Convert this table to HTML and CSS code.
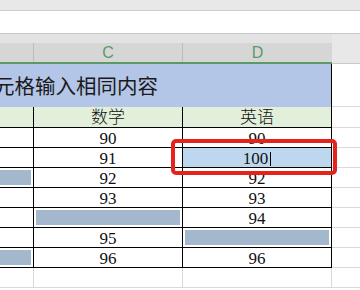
FILE: index.html
```html
<!DOCTYPE html>
<html lang="zh-CN">
<head>
<meta charset="utf-8">
<link rel="stylesheet" href="styles.css">
</head>
<body>
<div class="top"></div>
<div class="fx"></div>
<div class="colhead">
  <div class="hc"><div class="lab"></div></div>
  <div class="hc"><div class="lab">C</div></div>
  <div class="hc"><div class="lab last">D</div></div>
  <div class="hc rest"></div>
</div>
<div class="sheet">
  <div class="c title">元格输入相同内容</div>
  <div class="c e tall"></div>

  <div class="c hd"></div>
  <div class="c hd cjk">数学</div>
  <div class="c hd cjk">英语</div>
  <div class="c e hdr"></div>

  <div class="c"></div><div class="c">90</div><div class="c">90</div><div class="c e"></div>
  <div class="c"></div><div class="c">91</div><div class="c sel">100<span class="cursor"></span></div><div class="c e"></div>
  <div class="c"><div class="bar l"></div></div><div class="c">92</div><div class="c">92</div><div class="c e"></div>
  <div class="c"></div><div class="c">93</div><div class="c">93</div><div class="c e"></div>
  <div class="c"></div><div class="c"><div class="bar"></div></div><div class="c">94</div><div class="c e"></div>
  <div class="c"></div><div class="c">95</div><div class="c"><div class="bar"></div></div><div class="c e"></div>
  <div class="c"><div class="bar l"></div></div><div class="c">96</div><div class="c">96</div><div class="c e"></div>

  <div class="c empty"></div><div class="c empty"></div><div class="c empty"></div><div class="c e"></div>
</div>
<div class="mark"></div>
</body>
</html>
```
FILE: styles.css
```css
html, body {
  margin: 0;
  padding: 0;
  background: #ffffff;
  overflow: hidden;
  width: 360px;
  height: 290px;
}
body {
  position: relative;
  font-family: "Liberation Serif", serif;
}
.top {
  height: 10px;
  background: #e8e8e8;
  border-bottom: 1px solid #cdcdcd;
}
.fx {
  height: 22px;
  background: #ffffff;
  border-bottom: 1px solid #c6c6c6;
}
.colhead {
  display: grid;
  grid-template-columns: 34px 149px 149px 1fr;
  height: 30px;
}
.hc {
  box-sizing: border-box;
  height: 30px;
  background: #e3e3e3;
  border-bottom: 2px solid #5a9a66;
  padding-top: 9px;
}
.hc.rest {
  background: #e8e8e8;
  border-bottom: 1px solid #cacaca;
  padding-top: 0;
}
.lab {
  box-sizing: border-box;
  height: 19px;
  background: #d6d6d6;
  border-right: 1px solid #bcbcbc;
  display: flex;
  align-items: center;
  justify-content: center;
  font-family: "Liberation Sans", sans-serif;
  font-size: 16px;
  color: #5e9968;
}
.lab.last {
  border-right: none;
}
.sheet {
  display: grid;
  grid-template-columns: 34px 149px 149px 1fr;
}
.c {
  box-sizing: border-box;
  height: 20px;
  border-right: 1px solid #000;
  border-bottom: 1px solid #000;
  font-family: "Liberation Serif", serif;
  font-size: 17px;
  line-height: 22px;
  text-align: center;
  color: #111;
}
.c.e {
  border-right: none;
  border-bottom: 1px solid #dadada;
}
.c.tall {
  height: 43px;
}
.c.hdr {
  height: 21px;
}
.title {
  grid-column: span 3;
  height: 43px;
  border-bottom: none;
  background: #b4c6e7;
  font-family: "Noto Sans CJK SC", sans-serif;
  font-size: 20.5px;
  line-height: 43px;
  text-align: left;
  text-indent: -6px;
  white-space: nowrap;
  color: #1a1a1a;
}
.hd {
  height: 21px;
  background: #e2efda;
}
.cjk {
  font-family: "Noto Sans CJK SC", sans-serif;
  font-weight: 300;
  line-height: 18px;
}
.sel {
  background: #bdd7ee;
}
.cursor {
  display: inline-block;
  width: 1px;
  height: 14px;
  background: #000;
  margin-left: 2px;
  vertical-align: -2px;
}
.bar {
  height: 15px;
  margin: 2px 2px 0 2px;
  background: #a3b8cc;
}
.bar.l {
  margin-left: 0;
}
.c.empty {
  border-right-color: #d9d9d9;
  border-bottom-color: #d9d9d9;
}
.mark {
  position: absolute;
  left: 171px;
  top: 139px;
  width: 166px;
  height: 36px;
  box-sizing: border-box;
  border: 4px solid #e4241c;
  border-radius: 5px;
}
```
